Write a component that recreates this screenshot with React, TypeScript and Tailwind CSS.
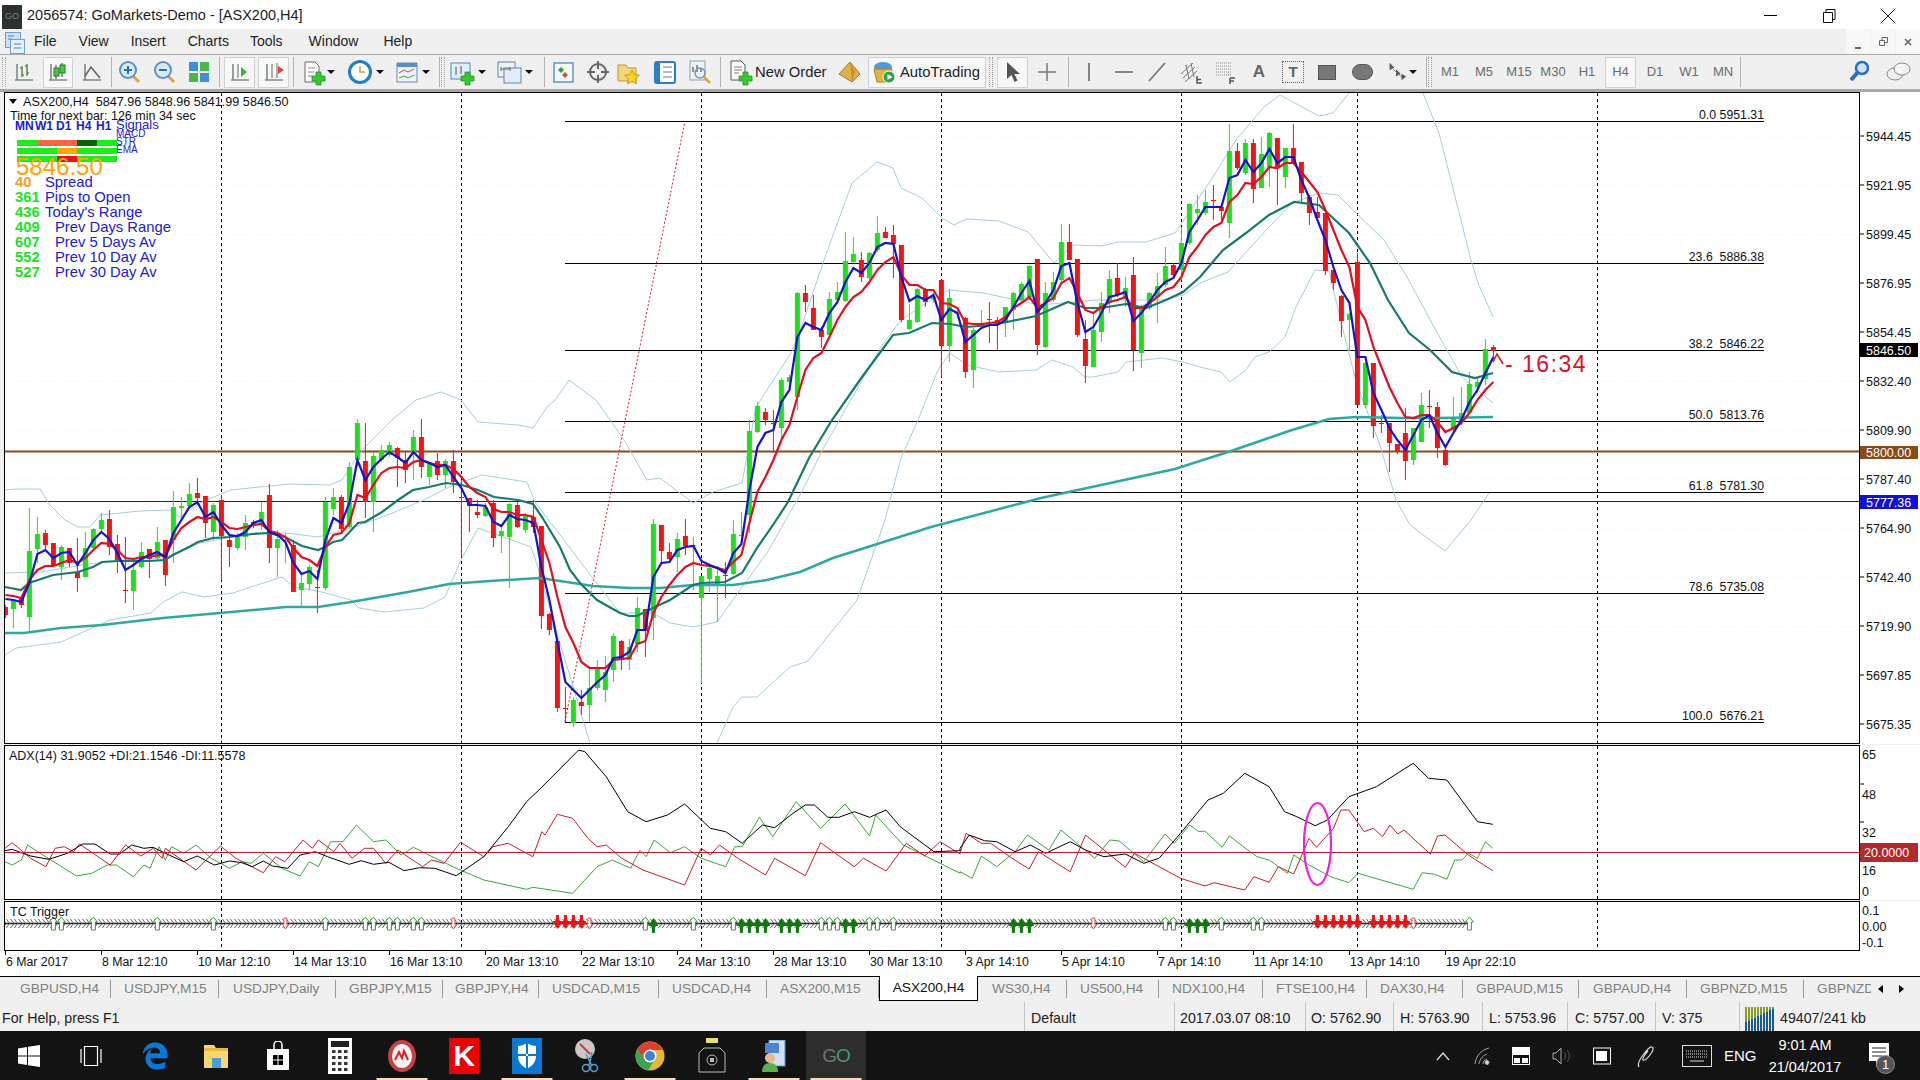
import type { ReactNode } from "react";
import { FaEdgeLegacy } from "react-icons/fa6";

const FONT = "font-['Liberation_Sans',Arial,sans-serif]";

// [green?, wick top, body top, body bottom, wick bottom], one bar every 8px
const BARS: number[][] = [
  [0,605,607,615,618],[1,600,601,609,628],[0,596,597,605,608],[1,508,551,617,632],[1,517,534,549,563],[0,530,533,545,550],[0,543,543,566,567],[1,545,547,567,580],[0,548,548,563,567],[0,538,572,578,592],
  [1,532,548,577,577],[1,528,529,548,550],[1,513,520,529,533],[0,510,519,547,555],[0,535,544,560,573],[0,537,590,591,603],[1,560,570,591,610],[1,542,552,567,568],[0,549,549,559,578],[1,527,542,558,560],
  [0,540,540,575,586],[1,491,507,540,563],[1,497,506,508,520],[1,483,494,506,507],[0,478,493,498,505],[0,496,496,523,538],[1,503,505,532,540],[0,495,500,536,580],[0,535,540,547,567],[1,533,537,548,550],
  [1,515,523,537,550],[0,520,522,524,528],[1,502,512,524,530],[0,484,495,548,563],[1,530,539,548,577],[1,533,537,538,563],[0,540,545,592,592],[1,575,583,590,607],[1,565,567,584,590],[0,570,587,588,613],
  [1,497,502,588,590],[1,488,497,509,515],[0,495,497,529,533],[1,462,467,527,528],[1,419,423,460,467],[0,423,461,502,518],[1,453,456,502,532],[1,445,450,460,462],[1,442,445,455,457],[0,447,448,458,487],
  [0,452,460,470,483],[1,430,437,452,480],[0,419,437,467,478],[1,462,463,477,485],[0,453,461,475,480],[1,459,461,475,488],[0,450,461,482,493],[0,480,497,498,557],[0,498,498,506,532],[0,500,512,515,518],
  [1,503,507,516,517],[0,500,503,538,547],[1,527,531,536,553],[1,503,504,537,588],[0,502,505,527,528],[1,513,515,530,533],[0,500,517,527,533],[0,526,526,616,629],[0,613,614,630,635],[0,641,641,708,712],
  [0,687,708,709,722],[1,697,700,723,727],[0,690,702,706,715],[1,668,688,705,722],[1,660,668,688,690],[1,656,672,690,702],[1,633,636,670,682],[0,640,641,660,670],[1,639,647,660,670],[1,597,608,644,652],
  [0,609,609,631,657],[1,519,524,618,640],[0,525,525,551,563],[0,543,552,559,560],[1,533,539,557,572],[0,519,536,546,555],[1,537,545,546,590],[1,576,576,598,683],[1,563,568,579,592],[1,566,576,585,622],
  [0,562,575,576,598],[1,520,534,574,575],[1,512,535,536,537],[1,420,431,515,533],[1,402,406,432,433],[0,408,412,420,425],[0,410,423,424,453],[1,378,380,428,438],[1,375,377,382,385],[1,292,293,397,410],
  [0,285,293,302,312],[0,295,308,330,330],[0,327,330,337,348],[1,292,299,335,335],[1,282,292,300,300],[1,232,261,301,302],[1,237,254,262,263],[0,252,260,277,282],[1,252,253,278,280],[1,216,233,250,252],
  [0,227,232,238,238],[0,225,235,244,278],[0,245,245,320,322],[1,304,320,329,330],[1,288,289,322,323],[0,288,290,302,307],[1,293,297,299,303],[0,280,280,346,377],[1,289,298,346,362],[1,310,313,314,318],
  [0,317,318,372,378],[1,328,330,370,388],[1,310,323,325,327],[0,302,319,320,343],[0,317,320,324,350],[1,307,307,323,337],[1,292,293,310,330],[1,282,284,300,303],[1,265,266,297,300],[0,259,259,345,355],
  [1,282,293,347,348],[1,272,282,300,302],[1,224,242,280,282],[0,224,242,260,260],[0,259,259,335,337],[0,320,339,366,383],[1,313,330,367,367],[1,292,303,332,342],[1,270,279,303,313],[0,263,278,295,297],
  [1,277,288,297,307],[0,257,275,350,371],[1,305,307,353,368],[1,292,293,308,310],[1,273,286,297,323],[1,247,266,285,287],[0,263,265,275,277],[1,227,243,270,280],[1,203,204,243,245],[1,195,209,213,225],
  [1,190,202,213,215],[0,185,200,201,220],[0,203,207,211,220],[1,124,151,223,238],[0,143,151,168,170],[1,139,143,173,175],[0,139,143,189,203],[1,137,154,188,188],[1,132,133,167,187],[0,138,138,167,205],
  [1,148,148,177,188],[0,124,148,163,163],[0,162,162,193,203],[0,195,197,213,225],[0,197,212,218,220],[0,213,213,271,275],[0,270,270,283,290],[0,295,296,321,337],[1,313,314,320,351],[0,253,262,405,405],
  [1,362,363,405,408],[0,363,363,426,438],[0,415,423,424,433],[0,423,423,443,472],[0,444,444,452,454],[0,408,433,461,480],[1,428,428,460,465],[1,393,405,442,442],[0,390,406,407,428],[0,402,407,448,458],
  [0,445,450,465,466],[1,397,418,430,432],[1,387,413,422,425],[1,372,384,413,413],[1,377,382,387,393],[1,339,349,379,385],[0,345,347,351,357],
];

const BLUE = [599,600,602,583,554,550,558,553,552,565,553,540,532,539,553,570,565,559,555,552,557,533,520,507,502,517,512,525,535,536,532,523,520,532,535,542,563,574,571,579,540,518,523,503,460,480,467,459,452,457,463,452,460,463,467,465,477,488,505,505,506,522,526,515,519,520,523,567,600,642,682,690,698,690,682,675,658,657,652,630,630,577,563,562,550,547,546,561,565,568,573,553,544,490,447,433,430,402,390,337,323,327,330,313,302,282,268,273,263,247,243,244,277,301,296,300,295,320,309,313,342,335,328,325,325,320,307,293,281,312,303,290,266,263,303,332,327,313,297,295,292,321,313,302,290,282,278,263,232,220,207,207,207,178,175,160,172,163,149,163,157,157,180,198,220,240,267,290,303,357,357,393,410,428,440,450,435,420,415,433,447,433,420,402,390,373,357];
const RED = [595,596,598,580,570,566,566,563,560,563,558,550,543,544,550,558,559,557,557,555,556,540,528,522,517,519,517,522,528,529,527,525,524,531,533,537,548,557,560,566,547,535,533,523,495,498,485,473,468,467,468,462,460,463,465,465,469,477,487,493,497,509,512,512,515,515,517,540,563,597,627,643,662,668,668,668,660,659,658,644,641,613,597,585,575,567,563,565,566,568,570,562,555,523,492,477,460,440,425,397,370,358,353,337,320,307,297,292,282,270,262,257,275,285,285,290,290,303,304,308,323,324,324,323,322,317,308,303,297,308,303,298,283,278,293,310,313,307,302,300,297,308,308,303,297,290,287,277,257,247,235,227,223,202,195,183,184,177,167,168,163,163,172,182,192,210,230,250,267,307,320,347,367,387,403,417,418,415,415,422,432,428,423,413,400,390,382];

const EMA_SLOW = "5,587 21,590 29,583 38,580 53,575 78,572 93,567 102,562 118,561 149,561 165,560 173,555 189,547 198,542 213,538 229,537 253,534 269,533 285,537 302,546 318,550 325,547 333,542 342,540 358,523 365,522 382,512 398,500 413,490 429,487 446,483 462,485 478,490 494,497 518,500 533,504 542,517 560,547 570,570 580,583 597,600 620,613 629,616 637,616 653,608 670,600 693,585 701,583 725,582 742,573 757,548 773,525 788,502 809,458 832,420 862,377 893,335 909,333 932,323 950,324 966,327 991,325 1007,322 1036,316 1068,302 1085,308 1101,308 1126,304 1146,308 1166,300 1183,292 1200,277 1223,250 1246,233 1269,215 1294,202 1319,205 1349,233 1370,263 1388,300 1409,333 1430,350 1452,372 1475,378 1493,373";
const SMA = "5,633 24,633 61,628 102,625 163,618 220,613 286,607 318,607 351,602 408,592 449,584 490,581 539,578 560,581 593,586 630,588 660,588 693,585 733,585 767,580 800,572 833,558 931,527 1041,498 1175,469 1228,452 1292,430 1329,419 1356,417 1402,418 1439,418 1493,417";
const BANDS = [
  "5,490 15,489 40,489 50,505 65,520 78,527 90,527 100,515 140,511 170,510 180,517 200,503 230,490 290,484 330,485 342,480 355,460 365,447 392,420 416,400 441,392 461,400 478,422 518,425 533,428 547,407 555,400 569,380 596,400 624,440 647,480 660,478 693,503 713,492 742,483 756,407 791,353 797,340 824,260 852,183 877,162 893,168 901,188 922,198 942,218 954,225 967,219 999,221 1028,232 1054,263 1073,245 1101,246 1118,242 1146,242 1175,233 1211,180 1236,140 1264,107 1280,95 1319,116 1333,113 1349,93",
  "1423,93 1439,133 1471,260 1478,283 1493,317",
  "5,573 41,572 82,565 122,560 163,558 200,543 253,533 286,533 318,537 351,528 380,518 424,500 449,487 482,475 527,482 535,502 592,577 620,613 653,613 670,623 693,627 717,622 740,590 767,553 800,495 824,447 881,347 901,320 938,295 950,290 983,293 1007,298 1040,305 1095,300 1162,300 1183,295 1200,283 1228,272 1269,227 1292,203 1319,193 1338,195 1358,215 1384,240 1407,277 1434,327 1462,377 1493,403",
  "5,655 16,648 61,642 110,620 151,613 163,602 182,592 204,597 233,593 257,585 282,577 294,587 322,592 351,600 359,608 384,612 424,608 445,597 461,560 478,528 492,533 531,547 539,570 559,640 590,743",
  "717,743 733,707 742,697 757,697 790,667 808,661 857,600 885,520 901,458 918,420 938,370 950,353 967,365 999,372 1036,370 1052,360 1073,367 1085,377 1093,377 1118,372 1126,362 1162,358 1183,362 1200,367 1221,372 1230,382 1246,370 1255,357 1269,352 1285,337 1296,307 1315,270 1329,271 1343,330 1357,385 1380,445 1396,500 1410,525 1430,540 1445,551 1471,520 1489,493",
];

// ADX lines, sampled in crop units: x / 1.633, y / 3 + 730
const ADX_BLACK = [[8,362,20,358,50,378,80,388,110,370,135,342,155,342,180,372,195,372,215,345,235,355,250,352,270,370,300,395,322,378,350,405,375,393,395,398,412,410,430,393,445,408,470,415,490,375,515,365,535,380,570,403,590,392,610,403,635,397,660,422,685,413,710,415,745,437,790,380,830,290,860,215,880,180,945,60,955,65,990,140,1025,245,1055,275,1090,255,1118,222,1160,295,1185,305,1212,340,1245,285,1265,293,1295,250,1315,225,1330,225,1352,262,1370,262,1395,245,1420,262,1447,240,1470,290,1525,365,1568,362],[0,355,15,315,40,332,60,335,90,365,115,345,140,370,180,335,205,360,235,380,270,372,300,400,325,385,360,310,405,210,430,190,465,130,505,170,530,245,550,260,580,287,600,270,635,200,680,170,740,100,765,145,795,150,845,275,870,283]];
const ADX_RED = [[8,355,20,338,50,385,75,410,90,355,105,350,120,365,130,342,180,405,205,345,230,378,250,355,265,385,270,355,320,420,360,348,385,385,430,428,450,380,465,395,495,330,510,355,520,330,545,365,555,340,575,385,595,355,610,355,630,400,650,360,690,410,705,390,725,400,752,337,790,380,805,350,830,340,870,380,885,305,890,315,910,253,935,265,960,325,975,350,990,345,1015,385,1050,420,1118,465,1145,355,1160,375,1175,345,1205,385,1250,435,1265,385,1315,437,1340,338,1395,410,1410,385,1447,423,1480,340,1510,378,1535,335,1568,372],[0,370,10,310,35,340,50,340,85,385,113,417,128,365,180,425,205,315,270,412,285,370,360,445,400,468,415,458,465,480,480,440,505,457,520,410,545,432,570,325,582,352,610,295,622,240,635,240,660,305,675,295,690,320,702,285,715,312,725,300,768,372,780,318,792,315,830,375,870,422]];
const ADX_GREEN = [[8,395,20,405,35,390,45,345,70,375,125,438,150,430,175,405,190,405,218,440,235,405,245,415,260,350,270,390,280,350,300,370,320,345,345,385,375,415,395,395,410,400,430,370,460,415,490,438,505,395,520,410,540,335,560,335,582,285,610,335,630,330,655,375,675,352,700,375,745,415,790,450,860,478,870,472,935,490,975,410,1000,390,1030,415,1045,360,1055,380,1068,330,1095,368,1118,350,1145,385,1185,410,1200,350,1212,350,1240,262,1262,320,1300,215,1340,295,1380,222,1420,318,1430,255,1475,345,1568,430],[0,425,20,445,35,378,60,410,90,365,110,315,145,360,165,300,220,385,245,330,260,333,300,395,335,312,350,340,375,285,390,305,400,303,428,352,440,318,470,360,485,380,505,390,535,430,545,375,570,405,605,440,635,458,650,430,740,478,755,428,775,433,795,448,808,390,820,390,830,370,845,385,858,335,870,355]];

const toAbs = (parts: number[][]) =>
  parts
    .flatMap((p, i) => {
      const out: string[] = [];
      for (let j = 0; j < p.length; j += 2) out.push(`${(p[j] / 1.633 + (i ? 960 : 0)).toFixed(1)},${(p[j + 1] / 3 + 730).toFixed(1)}`);
      return out;
    })
    .join(" ");

const barX = (k: number) => 5.4 + 8 * k;
const series = (ys: number[]) => ys.map((y, k) => `${barX(k)},${y}`).join(" ");

const VLINES = [221, 461, 701, 941, 1181, 1357, 1597];
const FIBS: [string, number][] = [
  ["0.0 5951.31", 121],
  ["23.6\u00a0 5886.38", 263],
  ["38.2\u00a0 5846.22", 350],
  ["50.0\u00a0 5813.76", 421],
  ["61.8\u00a0 5781.30", 492],
  ["78.6\u00a0 5735.08", 593],
  ["100.0\u00a0 5676.21", 722],
];
const PRICE_TICKS: [string, number][] = [
  ["5944.45", 136], ["5921.95", 185], ["5899.45", 234], ["5876.95", 283], ["5854.45", 332], ["5832.40", 381], ["5809.90", 430],
  ["5787.40", 479], ["5764.90", 528], ["5742.40", 577], ["5719.90", 626], ["5697.85", 675], ["5675.35", 724],
];

const TC_GREEN_OUT = [6, 7, 11, 19, 26, 40, 45, 46, 48, 49, 51, 52, 80, 86, 91, 102, 103, 104, 108, 109, 111, 145, 146, 152, 156, 157, 183];
const TC_GREEN = [81, 92, 93, 94, 95, 97, 98, 99, 105, 106, 126, 127, 128, 148, 149, 150];
const TC_RED = [69, 70, 71, 72, 164, 165, 166, 167, 168, 169, 171, 172, 173, 174, 175];
const TC_RED_OUT = [35, 56, 73, 136, 176];

const TIME_LABELS = ["6 Mar 2017", "8 Mar 12:10", "10 Mar 12:10", "14 Mar 13:10", "16 Mar 13:10", "20 Mar 13:10", "22 Mar 13:10", "24 Mar 13:10", "28 Mar 13:10", "30 Mar 13:10", "3 Apr 14:10", "5 Apr 14:10", "7 Apr 14:10", "11 Apr 14:10", "13 Apr 14:10", "19 Apr 22:10"];

const TABS: [string, string][] = [
  ["GBPUSD,H4", "w-[109px] pl-[18px]"], ["USDJPY,M15", "w-[108px] pl-[13px]"], ["USDJPY,Daily", "w-[117px] pl-[14px]"], ["GBPJPY,M15", "w-[107px] pl-[13px]"],
  ["GBPJPY,H4", "w-[96px] pl-[12px]"], ["USDCAD,M15", "w-[120px] pl-[13px]"], ["USDCAD,H4", "w-[108px] pl-[13px]"], ["ASX200,M15", "w-[112px] pl-[13px]"],
];
const TABS_AFTER: [string, string][] = [
  ["WS30,H4", "w-[89px] pl-[14px]"], ["US500,H4", "w-[92px] pl-[13px]"], ["NDX100,H4", "w-[104px] pl-[13px]"], ["FTSE100,H4", "w-[104px] pl-[13px]"],
  ["DAX30,H4", "w-[96px] pl-[13px]"], ["GBPAUD,M15", "w-[116px] pl-[13px]"], ["GBPAUD,H4", "w-[108px] pl-[14px]"], ["GBPNZD,M15", "w-[117px] pl-[13px]"],
];

function Grip({ className = "" }: { className?: string }) {
  return <div className={`w-[4px] h-[30px] shrink-0 border-x border-dotted border-[#a0a0a0] ${className}`} />;
}

function Sep({ className = "" }: { className?: string }) {
  return <div className={`w-px h-[30px] shrink-0 bg-[#b4b4b4] ${className}`} />;
}

function Cell({ className = "", active = false, children }: { className?: string; active?: boolean; children?: ReactNode }) {
  return (
    <div className={`h-[31px] shrink-0 flex items-center justify-center ${active ? "bg-[#f8f8f8] border border-[#d2d2d2]" : ""} ${className}`}>
      {children}
    </div>
  );
}

function Caret({ className = "" }: { className?: string }) {
  return (
    <div className={`w-[8px] shrink-0 flex justify-center ${className}`}>
      <div className="border-x-[4px] border-t-[4px] border-x-transparent border-t-[#111]" />
    </div>
  );
}

function Ico({ children, size = 24 }: { children: ReactNode; size?: number }) {
  return (
    <svg width={size} height={size} viewBox="0 0 24 24" fill="none" className="shrink-0 overflow-visible">
      {children}
    </svg>
  );
}

const AXES = <path d="M5 4v16M3 20h18" stroke="#7b8a8a" strokeWidth="1.6" />;
const PLUS = <path d="M15 12h5v4h4v5h-4v4h-5v-4h-4v-5h4z" fill="#35c831" stroke="#1e8a1c" strokeWidth="0.7" />;

function BarsIcon() {
  return <Ico>{AXES}<path d="M10 6v11M8 8h2M10 15h2M15 4v12M13 6h2M15 13h2" stroke="#6b8a5a" strokeWidth="1.6" /></Ico>;
}
function CandleIcon() {
  return <Ico>{AXES}<path d="M10 5v14" stroke="#333" /><rect x="8" y="8" width="5" height="8" fill="#4bc44b" stroke="#2a7a2a" /><path d="M16 3v14" stroke="#333" /><rect x="14" y="5" width="5" height="8" fill="#4bc44b" stroke="#2a7a2a" /></Ico>;
}
function LineIcon() {
  return <Ico>{AXES}<path d="M5 16 11 7l4 5 5 6" stroke="#666" strokeWidth="1.6" /></Ico>;
}
function ZoomIcon({ plus }: { plus?: boolean }) {
  return (
    <Ico>
      <path d="m14 15 7 7" stroke="#d9a63a" strokeWidth="3" />
      <circle cx="10" cy="10" r="8" fill="#d8eafa" stroke="#5d8fc7" strokeWidth="2" />
      <path d={plus ? "M6 10h8M10 6v8" : "M6 10h8"} stroke="#2d6fb5" strokeWidth="2" />
    </Ico>
  );
}
function GridIcon() {
  return <Ico><rect x="2" y="2" width="9" height="9" fill="#3f8ed8" /><rect x="13" y="2" width="9" height="9" fill="#49b849" /><rect x="2" y="13" width="9" height="9" fill="#49b849" /><rect x="13" y="13" width="9" height="9" fill="#3f8ed8" /></Ico>;
}
function ShiftIcon() {
  return <Ico>{AXES}<path d="M10 4v14" stroke="#666" /><path d="m13 7 6 5-6 5z" fill="#35b835" /></Ico>;
}
function ScrollIcon() {
  return <Ico>{AXES}<path d="M10 4v14M15 3v15" stroke="#666" /><path d="m22 10-6-4v8z" fill="#e04040" /></Ico>;
}
function NewFileIcon() {
  return <Ico><path d="M4 2h10l4 4v16H4z" fill="#fff" stroke="#666" /><path d="M7 8h7M7 12h6M7 16h4" stroke="#888" />{PLUS}</Ico>;
}
function ClockIcon() {
  return <Ico><circle cx="12" cy="12" r="10.5" fill="#fff" stroke="#1f7fc9" strokeWidth="3" /><path d="M12 6v6h5" stroke="#e09a30" strokeWidth="1.6" /></Ico>;
}
function IndicatorIcon() {
  return <Ico><rect x="2" y="3" width="20" height="19" fill="#eef3fa" stroke="#5c8fc0" /><rect x="2" y="3" width="20" height="4" fill="#5c8fc0" /><path d="m4 13 5-3 4 2 6-3" stroke="#d04a3a" /><path d="m4 18 5-2 4 2 6-3" stroke="#4aa04a" /></Ico>;
}
function NewChartIcon() {
  return <Ico><rect x="1" y="3" width="19" height="16" fill="#dfeefa" stroke="#4d86bf" /><path d="M6 7v8M11 6v8" stroke="#555" />{PLUS}</Ico>;
}
function CopyChartIcon() {
  return <Ico><rect x="1" y="2" width="17" height="15" fill="#eef3f8" stroke="#5c86ae" /><rect x="7" y="8" width="17" height="15" fill="#e4edf6" stroke="#5c86ae" /><path d="M4 9h9M4 7v4M13 7v4" stroke="#666" /></Ico>;
}
function ProfileIcon() {
  return <Ico><rect x="3" y="3" width="19" height="19" fill="#f4f8fc" stroke="#6c9bc8" strokeWidth="1.6" /><path d="m10 7 3 3-3 3-3-3z" fill="#38a038" /><path d="m14 12 3 3-3 3-3-3z" fill="#d9542f" /></Ico>;
}
function CrossCircleIcon() {
  return <Ico><circle cx="12" cy="12" r="8" stroke="#666" strokeWidth="2" /><path d="M12 1v8M12 15v8M1 12h8M15 12h8" stroke="#666" strokeWidth="2" /></Ico>;
}
function FolderIcon() {
  return <Ico><path d="M2 5h8l2 3h8v13H2z" fill="#f6d67a" stroke="#b8943a" /><path d="m16 10 2.3 4.6 5 .7-3.6 3.5.9 5-4.6-2.4-4.6 2.4.9-5-3.6-3.5 5-.7z" fill="#f9d423" stroke="#c59a1a" /></Ico>;
}
function NavIcon() {
  return <Ico><rect x="2" y="2" width="20" height="21" rx="2" fill="#fff" stroke="#2b7fc4" strokeWidth="2" /><rect x="2" y="2" width="5" height="21" fill="#2b7fc4" /><path d="M10 7h9M10 12h9M10 17h9" stroke="#777" /></Ico>;
}
function ReportIcon() {
  return <Ico><rect x="2" y="1" width="15" height="19" fill="#eef2f6" stroke="#8aa0b5" /><path d="M5 12V7M9 12V5M13 12V8" stroke="#5b7a9a" strokeWidth="1.5" /><circle cx="12" cy="13" r="5" fill="none" stroke="#7f93a8" strokeWidth="1.5" /><path d="m16 17 6 6" stroke="#d9a63a" strokeWidth="2.5" /></Ico>;
}
function OrderIcon() {
  return <Ico><path d="M3 1h10l4 4v15H3z" fill="#fff" stroke="#555" /><path d="M6 7h8M6 10h8M6 13h5" stroke="#777" />{PLUS}</Ico>;
}
function DiamondIcon() {
  return <Ico><path d="M13 2 23 14l-8 8L2 14z" fill="#e0b04a" stroke="#a87a20" /><path d="m13 2 5 10-3 10" fill="#c89030" /></Ico>;
}
function RobotIcon() {
  return <Ico><ellipse cx="11" cy="7" rx="9" ry="5" fill="#4f9bd6" /><path d="M2 9h18l-2 13H5z" fill="#e4b340" stroke="#a87f22" /><circle cx="17" cy="17" r="6" fill="#27a84a" stroke="#fff" /><path d="m15.5 14 5 3-5 3z" fill="#fff" /></Ico>;
}
function CursorIcon() {
  return <Ico><path d="M6 2v17l4.5-4 3 7 3-1.5-3-6.5h5.5z" fill="#555" /></Ico>;
}
function TfLabel({ text, className }: { text: string; className?: string }) {
  return <Cell className={`w-[28px] text-[13px] text-[#6c6c6c] ${className}`}>{text}</Cell>;
}

function TitleBar() {
  return (
    <div className="h-[29px] bg-white flex items-center shrink-0">
      <div className="ml-[2px] w-[20px] h-[24px] mt-[4px] bg-[#2c3130] flex items-center justify-center">
        <span className="text-[9px] text-[#70807a]">GO</span>
      </div>
      <span className="ml-[5px] mt-[2px] text-[14.5px] text-[#1c1c1c] whitespace-nowrap">2056574: GoMarkets-Demo - [ASX200,H4]</span>
      <div className="ml-auto flex items-center mr-[25px] mt-[2px]">
        <div className="w-[13px] h-px bg-black mr-[45px]" />
        <svg width="14" height="14" viewBox="0 0 14 14" fill="none" stroke="#111" className="mr-[45px]">
          <path d="M1.5 3.5h9v10h-9zM4 3.5V.5h9v10h-2.5" />
        </svg>
        <svg width="14" height="14" viewBox="0 0 14 14" stroke="#111"><path d="m.5.5 13 13M13.5.5l-13 13" /></svg>
      </div>
    </div>
  );
}

function MenuBar() {
  return (
    <div className="h-[25px] bg-[#f0f0f0] flex items-center shrink-0 text-[14px] text-[#222]">
      <svg width="20" height="22" viewBox="0 0 20 22" className="ml-[5px] mt-[2px] shrink-0">
        <rect x="0.5" y="0.5" width="15" height="15" fill="#cfe2f5" stroke="#6f9fcb" />
        <rect x="5.5" y="7.5" width="14" height="14" fill="#e7f0fa" stroke="#6f9fcb" />
        <path d="M3 4h6M3 7h3M9 12h7M9 16h7" stroke="#4d7faf" />
      </svg>
      <span className="ml-[9px]">File</span>
      <span className="ml-[22px]">View</span>
      <span className="ml-[22px]">Insert</span>
      <span className="ml-[22px]">Charts</span>
      <span className="ml-[21px]">Tools</span>
      <span className="ml-[26px]">Window</span>
      <span className="ml-[25px]">Help</span>
      <div className="ml-auto flex h-[25px] text-[#666]">
        <div className="w-[24px] bg-[#f8f8f8] flex items-end justify-center pb-[5px] mr-px"><div className="w-[6px] h-[2px] bg-[#666]" /></div>
        <div className="w-[24px] bg-[#f8f8f8] flex items-center justify-center mr-px">
          <svg width="9" height="9" viewBox="0 0 9 9" fill="none" stroke="#666"><path d="M.5 3.5h5v5h-5zM3 3.5v-3h5.5v5H6" /></svg>
        </div>
        <div className="w-[24px] bg-[#f8f8f8] flex items-center justify-center">
          <svg width="8" height="8" viewBox="0 0 8 8" stroke="#666" strokeWidth="1.6"><path d="m1 1 6 6M7 1 1 7" /></svg>
        </div>
      </div>
    </div>
  );
}

function Toolbar() {
  return (
    <div className={`h-[35px] bg-[#f0f0f0] border-t border-[#a8a8a8] flex items-center shrink-0 ${FONT}`}>
      <Grip className="ml-[2px]" />
      <Cell className="w-[28px] ml-[4px]"><BarsIcon /></Cell>
      <Cell active className="w-[30px] ml-[5px]"><CandleIcon /></Cell>
      <Cell className="w-[28px] ml-[5px]"><LineIcon /></Cell>
      <Sep className="ml-[5px]" />
      <Cell className="w-[28px] ml-[4px]"><ZoomIcon plus /></Cell>
      <Cell className="w-[28px] ml-[7px]"><ZoomIcon /></Cell>
      <Cell className="w-[28px] ml-[6px]"><GridIcon /></Cell>
      <Sep className="ml-[6px]" />
      <Cell active className="w-[31px] ml-[4px]"><ShiftIcon /></Cell>
      <Cell active className="w-[31px] ml-[3px]"><ScrollIcon /></Cell>
      <Sep className="ml-[4px]" />
      <Cell className="w-[28px] ml-[5px]"><NewFileIcon /></Cell>
      <Caret />
      <Cell className="w-[28px] ml-[11px]"><ClockIcon /></Cell>
      <Caret className="ml-[2px]" />
      <Cell className="w-[28px] ml-[9px]"><IndicatorIcon /></Cell>
      <Caret className="ml-[1px]" />
      <Sep className="ml-[9px]" />
      <Grip className="ml-px" />
      <Cell className="w-[28px] ml-[3px]"><NewChartIcon /></Cell>
      <Caret className="ml-[2px]" />
      <Cell className="w-[28px] ml-[9px]"><CopyChartIcon /></Cell>
      <Caret className="ml-[2px]" />
      <Sep className="ml-[11px]" />
      <Cell className="w-[28px] ml-[4px]"><ProfileIcon /></Cell>
      <Cell className="w-[28px] ml-[7px]"><CrossCircleIcon /></Cell>
      <Cell className="w-[28px] ml-[2px]"><FolderIcon /></Cell>
      <Cell className="w-[28px] ml-[9px]"><NavIcon /></Cell>
      <Cell className="w-[28px] ml-[7px]"><ReportIcon /></Cell>
      <Sep className="ml-[6px]" />
      <Cell className="w-[24px] ml-[7px]"><OrderIcon /></Cell>
      <span className="ml-[3px] w-[72px] text-[14.8px] text-[#222] whitespace-nowrap">New Order</span>
      <Cell className="w-[28px] ml-[8px]"><DiamondIcon /></Cell>
      <Cell active className="w-[118px] ml-[5px] !justify-start pl-[3px]">
        <RobotIcon />
        <span className="ml-[4px] text-[14.8px] text-[#222] whitespace-nowrap">AutoTrading</span>
      </Cell>
      <Grip className="ml-[3px]" />
      <Cell active className="w-[31px] ml-[4px]"><CursorIcon /></Cell>
      <Cell className="w-[28px] ml-[5px]"><Ico><path d="M12 3v18M3 12h18" stroke="#777" strokeWidth="1.5" /></Ico></Cell>
      <Sep className="ml-[7px]" />
      <Cell className="w-[28px] ml-[6px]"><Ico><path d="M12 3v18" stroke="#777" strokeWidth="1.8" /></Ico></Cell>
      <Cell className="w-[28px] ml-[7px]"><Ico><path d="M3 12h18" stroke="#777" strokeWidth="1.8" /></Ico></Cell>
      <Cell className="w-[28px] ml-[5px]"><Ico><path d="m4 21 16-18" stroke="#777" strokeWidth="1.8" /></Ico></Cell>
      <Cell className="w-[28px] ml-[6px]"><Ico><path d="m2 14 12-11M4 18 16 7M6 22 18 11M7 5l3 14M12 3l3 14" stroke="#777" /><path d="M18 16v7h5M18 19.5h4" stroke="#555" strokeWidth="1.5" /></Ico></Cell>
      <Cell className="w-[28px] ml-[6px]"><Ico><path d="M3 3h15M3 6h15M3 9h15M3 12h15M3 15h15" stroke="#888" strokeDasharray="1 1" /><path d="M17 18v6M17 18h5M17 21h4" stroke="#555" strokeWidth="1.5" /></Ico></Cell>
      <Cell className="w-[28px] ml-[6px] text-[17px] font-bold text-[#666]">A</Cell>
      <Cell className="w-[28px] ml-[6px]">
        <div className="w-[22px] h-[22px] border border-dotted border-[#666] flex items-center justify-center text-[15px] font-bold text-[#666]">T</div>
      </Cell>
      <Cell className="w-[28px] ml-[6px]"><div className="w-[18px] h-[15px] bg-[#777] border border-[#555]" /></Cell>
      <Cell className="w-[28px] ml-[7px]"><div className="w-[21px] h-[16px] rounded-full bg-[#777] border border-[#555]" /></Cell>
      <Cell className="w-[27px] ml-[6px]"><Ico size={22}><path d="m5 2 5 5-5 3zM12 9l5 5-5 3zM18 14l5 3-5 4z" fill="#555" /><path d="m7 7 6 6M13 14l5 3" stroke="#888" /></Ico></Cell>
      <Caret />
      <Sep className="ml-[9px]" />
      <Grip className="ml-px" />
      <TfLabel text="M1" className="ml-[4px]" />
      <TfLabel text="M5" className="ml-[6px]" />
      <TfLabel text="M15" className="ml-[7px]" />
      <TfLabel text="M30" className="ml-[6px]" />
      <TfLabel text="H1" className="ml-[6px]" />
      <Cell active className="w-[31px] ml-[4px] text-[13px] text-[#6c6c6c]">H4</Cell>
      <TfLabel text="D1" className="ml-[5px]" />
      <TfLabel text="W1" className="ml-[6px]" />
      <TfLabel text="MN" className="ml-[6px]" />
      <Sep className="ml-[3px]" />
      <Cell className="w-[28px] ml-[104px]">
        <Ico><circle cx="15" cy="8" r="6" fill="#cfe2f5" stroke="#2a6fc0" strokeWidth="2.5" /><path d="m11 12-7 8" stroke="#2a6fc0" strokeWidth="4" /></Ico>
      </Cell>
      <Cell className="w-[28px] ml-[11px]">
        <Ico><ellipse cx="9" cy="14" rx="8" ry="6" fill="#f0f0f0" stroke="#888" /><ellipse cx="16" cy="9" rx="8" ry="6" fill="#f4f4f4" stroke="#888" /></Ico>
      </Cell>
    </div>
  );
}

function Legend() {
  const rows: [string, string, boolean][] = [
    ["361", "Pips to Open", false],
    ["436", "Today's Range", false],
    ["409", "Prev Days Range", true],
    ["607", "Prev 5 Days Av", true],
    ["552", "Prev 10 Day Av", true],
    ["527", "Prev 30 Day Av", true],
  ];
  return (
    <div className="absolute left-0 top-0 w-[320px] h-[200px]">
      <div className="absolute left-[4px] top-[6px] border-x-[4px] border-t-[5px] border-x-transparent border-t-black" />
      <div className="absolute left-[18px] top-[2px] text-[12.6px] leading-[15px] whitespace-pre text-[#111]">ASX200,H4  5847.96 5848.96 5841.99 5846.50</div>
      <div className="absolute left-[5px] top-[16px] text-[12.5px] leading-[15px] whitespace-pre text-[#111]">Time for next bar: 126 min 34 sec</div>
      <div className="absolute left-[10px] top-[26px] flex text-[12px] leading-[14px] font-bold text-[#2020d0]">
        <span className="w-[20px]">MN</span><span className="w-[20px]">W1</span><span className="w-[20px] pl-px">D1</span><span className="w-[21px] pl-px">H4</span><span>H1</span>
      </div>
      <div className="absolute left-[111px] top-[25px] text-[13px] leading-[14px] text-[#2020d0]">Signals</div>
      <div className="absolute left-[111px] top-[35px] text-[10px] leading-[12px] text-[#2020d0]">MACD</div>
      <div className="absolute left-[111px] top-[43px] text-[10px] leading-[12px] text-[#2020d0]">STR</div>
      <div className="absolute left-[111px] top-[51px] text-[10px] leading-[12px] text-[#2020d0]">EMA</div>
      <div className="absolute left-[12px] top-[47px] w-[100px] flex flex-col gap-[2px]">
        <div className="flex h-[6px]"><div className="w-[20px] bg-[#16f016]" /><div className="w-[40px] bg-[#ff6347]" /><div className="w-[20px] bg-[#006400]" /><div className="w-[20px] bg-[#16f016]" /></div>
        <div className="flex h-[6px]"><div className="w-[40px] bg-[#16f016]" /><div className="w-[20px] bg-[#ffa500]" /><div className="w-[40px] bg-[#16f016]" /></div>
        <div className="flex h-[6px]"><div className="w-[40px] bg-[#16f016]" /><div className="w-[20px] bg-[#f01010]" /><div className="w-[40px] bg-[#16f016]" /></div>
      </div>
      <div className="absolute left-[11px] top-[60px] text-[24px] leading-[28px] text-[#ffa500]">5846.50</div>
      <div className="absolute left-[10px] top-[82px] flex flex-col text-[14.8px] leading-[15px]">
        <div className="flex">
          <span className="w-[23px] font-bold text-[#f0a030]">40</span>
          <span className="ml-[7px] text-[#2020d0]">Spread</span>
        </div>
        {rows.map(([n, label, indent]) => (
          <div key={label} className="flex whitespace-nowrap">
            <span className="w-[23px] font-bold text-[#22e022]">{n}</span>
            <span className={`${indent ? "ml-[17px]" : "ml-[7px]"} text-[#2020d0]`}>{label}</span>
          </div>
        ))}
      </div>
    </div>
  );
}

function VLines({ top, bottom }: { top: number; bottom: number }) {
  return (
    <>
      {VLINES.map((x) => (
        <line key={x} x1={x + 0.5} x2={x + 0.5} y1={top} y2={bottom} stroke="#000" strokeDasharray="3 3" />
      ))}
    </>
  );
}

function AxisLabel({ y, text }: { y: number; text: string }) {
  return (
    <g>
      <line x1={1860} x2={1864} y1={y} y2={y} stroke="#000" />
      <text x={1866} y={y + 4.5} fontSize="12.5" fill="#111">{text}</text>
    </g>
  );
}

function PriceBox({ y, h = 14, text, fill }: { y: number; h?: number; text: string; fill: string }) {
  return (
    <g>
      <rect x={1860} y={y} width={58} height={h} fill={fill} />
      <text x={1866} y={y + h / 2 + 4.5} fontSize="12.5" fill="#fff">{text}</text>
    </g>
  );
}

function MainChart() {
  return (
    <div className="flex h-[652px] shrink-0">
      <div className="ml-[4px] relative w-[1856px] h-[652px] border border-black shrink-0 bg-white overflow-hidden">
        <svg width="1854" height="650" viewBox="5 93 1854 650" className="block">
          {PRICE_TICKS.map(([t, y]) => (
            <line key={t} x1={5} x2={1859} y1={y + 0.5} y2={y + 0.5} stroke="#f6f4e6" strokeDasharray="2 4" />
          ))}
          <VLines top={93} bottom={743} />
          {FIBS.map(([t, y]) => (
            <g key={t}>
              <line x1={565} x2={1764} y1={y + 0.5} y2={y + 0.5} stroke="#000" />
              <text x={1764} y={y - 2} textAnchor="end" fontSize="12.3" fill="#111">{t}</text>
            </g>
          ))}
          <line x1={565} y1={722} x2={685} y2={121} stroke="#c8202a" strokeDasharray="2 2" />
          <line x1={5} x2={1859} y1={451.5} y2={451.5} stroke="#8b4a1a" strokeWidth="2" />
          <line x1={5} x2={1859} y1={501.5} y2={501.5} stroke="#1010c8" />
          {BANDS.map((b) => (
            <polyline key={b.slice(0, 12)} points={b} fill="none" stroke="#a6cedb" />
          ))}
          {BARS.map(([up, wt, bt, bb, wb], k) => {
            const x = barX(k);
            const c = up ? "#1fe01f" : "#ee1616";
            return (
              <g key={k}>
                <line x1={x} x2={x} y1={wt} y2={wb} stroke={c} />
                <rect x={x - 2.5} y={bt} width={5} height={Math.max(bb - bt, 1)} fill={c} />
              </g>
            );
          })}
          <polyline points={SMA} fill="none" stroke="#30a8a0" strokeWidth="2.5" />
          <polyline points={EMA_SLOW} fill="none" stroke="#187a6e" strokeWidth="2.2" />
          <polyline points={series(RED)} fill="none" stroke="#e01020" strokeWidth="2.2" />
          <polyline points={series(BLUE)} fill="none" stroke="#1414c8" strokeWidth="2.2" />
          <polyline points="1493,362 1497,354 1503,364" fill="none" stroke="#e01020" strokeWidth="1.5" />
          <text x={1505} y={372} fontSize="23" letterSpacing="1.5" fill="#e01020">- 16:34</text>
        </svg>
        <Legend />
      </div>
      <svg width="60" height="652" viewBox="1860 92 60 652" className="block shrink-0 bg-white">
        {PRICE_TICKS.map(([t, y]) => (
          <AxisLabel key={t} y={y} text={t} />
        ))}
        <PriceBox y={343} text="5846.50" fill="#000" />
        <PriceBox y={446} h={13} text="5800.00" fill="#8b4a1a" />
        <PriceBox y={495} text="5777.36" fill="#1010d8" />
      </svg>
    </div>
  );
}

function AdxPanel() {
  return (
    <div className="flex h-[155px] mt-px shrink-0">
      <div className="ml-[4px] relative w-[1856px] h-[155px] border border-black shrink-0 bg-white overflow-hidden">
        <svg width="1854" height="153" viewBox="5 746 1854 153" className="block">
          <VLines top={746} bottom={899} />
          <polyline points={toAbs(ADX_GREEN)} fill="none" stroke="#3aa83a" />
          <polyline points={toAbs(ADX_RED)} fill="none" stroke="#c81e2a" />
          <polyline points={toAbs(ADX_BLACK)} fill="none" stroke="#000" />
          <line x1={5} x2={1859} y1={852.5} y2={852.5} stroke="#b81e30" />
          <ellipse cx={1317.5} cy={844} rx={13.5} ry={41} fill="none" stroke="#f01ee0" strokeWidth="2.2" />
        </svg>
        <div className="absolute left-[4px] top-[3px] text-[12.5px] leading-[15px] whitespace-pre text-[#111]">ADX(14) 31.9052 +DI:21.1546 -DI:11.5578</div>
      </div>
      <svg width="60" height="155" viewBox="1860 745 60 155" className="block shrink-0 bg-white">
        <text x={1862} y={759} fontSize="12.5" fill="#111">65</text>
        <line x1={1860} x2={1864} y1={784} y2={784} stroke="#000" />
        <text x={1862} y={799} fontSize="12.5" fill="#111">48</text>
        <line x1={1860} x2={1864} y1={822} y2={822} stroke="#000" />
        <text x={1862} y={837} fontSize="12.5" fill="#111">32</text>
        <rect x={1860} y={843} width={58} height={19} fill="#b42a2a" />
        <text x={1864} y={857} fontSize="12.5" fill="#fff">20.0000</text>
        <text x={1862} y={875} fontSize="12.5" fill="#111">16</text>
        <text x={1862} y={896} fontSize="12.5" fill="#111">0</text>
      </svg>
    </div>
  );
}

function TcPanel() {
  const lastBar = 183;
  const chevrons: number[] = [];
  for (let k = 0; k < lastBar; k++) chevrons.push(k);
  return (
    <div className="flex h-[50px] mt-px shrink-0">
      <div className="ml-[4px] relative w-[1856px] h-[50px] border border-black shrink-0 bg-white overflow-hidden">
        <svg width="1854" height="48" viewBox="5 902 1854 48" className="block">
          <VLines top={902} bottom={950} />
          <line x1={5} x2={barX(lastBar)} y1={923.5} y2={923.5} stroke="#222" strokeWidth="1.5" />
          {chevrons.map((k) => (
            <path key={k} d={`M${barX(k) - 3} 919l4 4.5-4 4.5M${barX(k) + 1} 919l3 4.5-3 4.5`} fill="none" stroke="#555" strokeWidth="0.9" />
          ))}
          {TC_GREEN_OUT.map((k) => (
            <path key={k} d={`M${barX(k)} 917l4 5h-2v8h-4v-8h-2z`} fill="#fff" stroke="#2e8b2e" strokeWidth="0.9" />
          ))}
          {TC_RED_OUT.map((k) => (
            <path key={k} d={`M${barX(k)} 929l3-5h-1.5v-6h-3v6h-1.5z`} fill="#fff" stroke="#e04040" strokeWidth="0.9" />
          ))}
          {TC_GREEN.map((k) => (
            <path key={k} d={`M${barX(k)} 918l5 8h-3.5v7h-3v-7h-3.5z`} fill="#0a7a0a" />
          ))}
          {TC_RED.map((k) => (
            <path key={k} d={`M${barX(k)} 929l-5-8h3.5v-6h3v6h3.5z`} fill="#ee1010" />
          ))}
        </svg>
        <div className="absolute left-[5px] top-[3px] text-[12.5px] leading-[15px] text-[#111]">TC Trigger</div>
      </div>
      <svg width="60" height="50" viewBox="1860 901 60 50" className="block shrink-0 bg-white">
        <text x={1862} y={915} fontSize="12.5" fill="#111">0.1</text>
        <text x={1862} y={931} fontSize="12.5" fill="#111">0.00</text>
        <text x={1862} y={947} fontSize="12.5" fill="#111">-0.1</text>
      </svg>
    </div>
  );
}

function TimeAxis() {
  return (
    <div className="h-[25px] bg-white flex pl-[5px] shrink-0">
      {TIME_LABELS.map((t) => (
        <div key={t} className="w-[96px] border-l border-black h-[4px] shrink-0">
          <div className="pt-[4px] text-[12.3px] leading-[15px] whitespace-nowrap text-[#111]">{t}</div>
        </div>
      ))}
    </div>
  );
}

function TabStrip() {
  return (
    <div className="h-[25px] bg-[#f0f0f0] border-t border-black flex items-stretch shrink-0 text-[13.7px] text-[#808080] relative">
      <div className="w-[2px] shrink-0" />
      {TABS.map(([t, w]) => (
        <div key={t} className={`${w} shrink-0 border-r border-[#9a9a9a] my-[3px] flex items-center whitespace-nowrap`}>{t}</div>
      ))}
      <div className="w-[99px] shrink-0 -mt-px mb-0 bg-white border-x border-b border-black text-[#111] flex items-center justify-center">ASX200,H4</div>
      {TABS_AFTER.map(([t, w]) => (
        <div key={t} className={`${w} shrink-0 border-r border-[#9a9a9a] my-[3px] flex items-center whitespace-nowrap`}>{t}</div>
      ))}
      <div className="w-[67px] shrink-0 pl-[13px] my-[3px] flex items-center overflow-hidden whitespace-nowrap">GBPNZD,H4</div>
      <div className="flex items-center gap-[16px] ml-[7px]">
        <div className="border-y-[4px] border-r-[5px] border-y-transparent border-r-black" />
        <div className="border-y-[4px] border-l-[5px] border-y-transparent border-l-black" />
      </div>
    </div>
  );
}

function StatusBar() {
  const cells: [string, string][] = [
    ["Default", "w-[150px] pl-[6px]"],
    ["2017.03.07 08:10", "w-[131px] pl-[5px]"],
    ["O: 5762.90", "w-[88px] pl-[5px]"],
    ["H: 5763.90", "w-[89px] pl-[6px]"],
    ["L: 5753.96", "w-[85px] pl-[6px]"],
    ["C: 5757.00", "w-[88px] pl-[7px]"],
    ["V: 375", "w-[84px] pl-[6px]"],
  ];
  return (
    <div className="h-[29px] bg-[#f0f0f0] flex items-center shrink-0 text-[14.2px] text-[#222] mt-px">
      <span className="w-[1024px] pl-[2px] pt-[4px] shrink-0">For Help, press F1</span>
      {cells.map(([t, w]) => (
        <div key={t} className={`${w} h-full shrink-0 border-l border-[#c4c4c4] pt-[4px] flex items-center whitespace-nowrap`}>{t}</div>
      ))}
      <div className="h-full border-l border-[#c4c4c4] pl-[5px] pt-[4px] flex items-center whitespace-nowrap">
        <svg width="31" height="24" viewBox="0 0 31 24" className="mr-[4px] shrink-0">
          {[0, 3, 6, 9, 12, 15, 18, 21, 24, 27].map((x, i) => (
            <g key={x}>
              <rect x={x} y={0} width={2} height={24 - i * 1.5 - 9} fill="#8a9a2a" />
              <rect x={x} y={24 - i * 1.5 - 9} width={2} height={i * 1.5 + 9} fill="#1a5a8a" />
            </g>
          ))}
        </svg>
        49407/241 kb
      </div>
    </div>
  );
}

function TaskCell({ children, w = "w-[62px]", open = false, className = "" }: { children: ReactNode; w?: string; open?: boolean; className?: string }) {
  return (
    <div className={`${w} h-[50px] shrink-0 flex items-center justify-center relative ${className}`}>
      {children}
      {open && <div className="absolute left-1/2 -translate-x-1/2 w-[51px] bottom-0 h-[3px] bg-[#f7dcbc]" />}
    </div>
  );
}

function Taskbar() {
  return (
    <div className="h-[50px] bg-[#131313] flex items-stretch shrink-0 text-white">
      <TaskCell w="w-[58px]">
        <svg width="22" height="22" viewBox="0 0 22 22" fill="#fff"><path d="M0 3.5 9 2v8.5H0zM10 1.8 22 0v10.5H10zM0 11.5h9V20l-9-1.5zM10 11.5h12V22l-12-1.8z" /></svg>
      </TaskCell>
      <TaskCell w="w-[66px]">
        <svg width="26" height="24" viewBox="0 0 26 24" fill="none" stroke="#fff" strokeWidth="1.2"><path d="M6.5 2.5h13v19h-13zM3 5v14M23 5v14" /></svg>
      </TaskCell>
      <TaskCell w="w-[61px]"><FaEdgeLegacy size={28} color="#0a78d7" /></TaskCell>
      <TaskCell>
        <svg width="28" height="28" viewBox="0 0 28 28"><path d="M2 3h10l2 3h12v20H2z" fill="#f7d774" /><rect x="10" y="16" width="9" height="10" fill="#4a9ed8" /><rect x="2" y="6" width="24" height="3" fill="#e8b93f" /></svg>
      </TaskCell>
      <TaskCell>
        <svg width="24" height="30" viewBox="0 0 24 30"><path d="M8 8V4a4 4 0 0 1 8 0v4" fill="none" stroke="#fff" strokeWidth="1.5" /><rect x="1" y="8" width="22" height="21" fill="#fff" /><rect x="7" y="14" width="4.5" height="4.5" /><rect x="12.5" y="14" width="4.5" height="4.5" /><rect x="7" y="19.5" width="4.5" height="4.5" /><rect x="12.5" y="19.5" width="4.5" height="4.5" /></svg>
      </TaskCell>
      <TaskCell>
        <svg width="24" height="36" viewBox="0 0 24 36" fill="#fff"><rect width="24" height="36" /><rect x="3" y="3" width="18" height="6" fill="#222" />{[12, 18, 24, 30].map((y) => [4, 10, 16].map((x) => <rect key={`${x}${y}`} x={x} y={y} width="3.5" height="3" fill="#333" />))}</svg>
      </TaskCell>
      <TaskCell open>
        <svg width="30" height="32" viewBox="0 0 30 32"><ellipse cx="15" cy="16" rx="14" ry="16" fill="#c94040" /><ellipse cx="15" cy="16" rx="10" ry="12" fill="#f2f2f2" /><path d="m8 20 4-8 3 6 2-7 4 9" fill="none" stroke="#e02020" strokeWidth="2" /></svg>
      </TaskCell>
      <TaskCell>
        <div className="w-[30px] h-[36px] bg-[#ee0000] flex items-center justify-center text-[30px] leading-none font-bold text-white">K</div>
      </TaskCell>
      <TaskCell open w="w-[64px]">
        <svg width="30" height="36" viewBox="0 0 30 36"><rect width="30" height="36" fill="#0a78d0" /><path d="M15 5c3 2 6 3 9 3v10c0 6-4 10-9 13-5-3-9-7-9-13V8c3 0 6-1 9-3z" fill="#fff" /><path d="M14 5v26h2V5zM6 16h18v2H6z" fill="#0a78d0" /></svg>
      </TaskCell>
      <TaskCell w="w-[58px]">
        <svg width="28" height="36" viewBox="0 0 28 36"><circle cx="11" cy="11" r="10" fill="#d0c4c8" /><path d="m6 6 10 10" stroke="#c04040" strokeWidth="2" /><path d="m12 16 6 12M18 14l-3 14" stroke="#5a9ac8" strokeWidth="1.6" /><circle cx="12" cy="30" r="3.5" fill="none" stroke="#5a9ac8" strokeWidth="1.5" /><circle cx="20" cy="30" r="3.5" fill="none" stroke="#5a9ac8" strokeWidth="1.5" /></svg>
      </TaskCell>
      <TaskCell open w="w-[66px]">
        <svg width="30" height="30" viewBox="0 0 30 30"><circle cx="15" cy="15" r="14.5" fill="#e8b92e" /><path d="M15 .5A14.5 14.5 0 0 0 2.5 8l7 12L15 9h12.5A14.5 14.5 0 0 0 15 .5z" fill="#d9402f" /><path d="M2.5 8A14.5 14.5 0 0 0 13 29.4L20 18l-10 2z" fill="#3aa655" /><circle cx="15" cy="15" r="6.5" fill="#fff" /><circle cx="15" cy="15" r="5" fill="#3f83d8" /></svg>
      </TaskCell>
      <TaskCell w="w-[58px]">
        <svg width="30" height="36" viewBox="0 0 30 36" fill="none"><rect x="9" y="0" width="12" height="5" fill="#e9e26a" /><path d="M7 10h16l5 5v19H2V15z" stroke="#bbb" /><circle cx="15" cy="22" r="5" stroke="#bbb" /><rect x="13" y="20" width="4" height="4" fill="#bbb" /></svg>
      </TaskCell>
      <TaskCell open w="w-[65px]">
        <svg width="26" height="32" viewBox="0 0 26 32"><rect x="8" y="0" width="16" height="26" fill="#cfe0f4" stroke="#5a8fc8" /><rect x="4" y="3" width="14" height="10" fill="#4a86d0" /><circle cx="9" cy="18" r="5" fill="#e8b894" /><path d="M1 32c0-6 3-9 8-9s8 3 8 9z" fill="#5ab04a" /></svg>
      </TaskCell>
      <TaskCell open w="w-[60px]" className="bg-[#2d2d2d]">
        <span className="text-[19px] tracking-[-1px] text-[#6d756f]">G<span className="text-[#4a9a6a]">O</span></span>
      </TaskCell>
      <div className="ml-auto flex items-center h-full">
        <svg width="14" height="10" viewBox="0 0 14 10" fill="none" stroke="#ddd" strokeWidth="1.3" className="mr-[24px]"><path d="m1 9 6-7 6 7" /></svg>
        <svg width="16" height="18" viewBox="0 0 16 18" fill="none" stroke="#aaa" className="mr-[22px]"><path d="M1 17C2 9 7 3 15 1M5 17c1-5 3-8 8-10M9 17c0-2 1-4 4-5" /><circle cx="13" cy="15.5" r="2" fill="#ddd" /></svg>
        <svg width="18" height="18" viewBox="0 0 18 18" className="mr-[22px]"><rect x="0.5" y="0.5" width="17" height="17" fill="none" stroke="#fff" /><rect x="0" y="0" width="18" height="8" fill="#fff" /><rect x="2" y="11" width="6" height="5" fill="#fff" /><rect x="10" y="11" width="6" height="5" fill="#fff" /></svg>
        <svg width="20" height="20" viewBox="0 0 20 20" fill="none" stroke="#aaa" className="mr-[21px]"><path d="M1 7h3l5-5v16l-5-5H1z" /><path d="M12 6c2 2 2 6 0 8M15 4c3 3 3 9 0 12" stroke="#555" /></svg>
        <svg width="18" height="20" viewBox="0 0 18 20" className="mr-[26px]"><rect x="0.5" y="2" width="17" height="16" fill="none" stroke="#fff" /><rect x="3" y="5" width="11" height="10" fill="#fff" /></svg>
        <svg width="18" height="26" viewBox="0 0 18 26" fill="none" stroke="#ddd" strokeWidth="1.2" className="mr-[27px]"><path d="M2 24c-2-3 1-8 4-12s7-9 9-8 1 4-2 8-6 6-7 5 2-6 5-9" /></svg>
        <svg width="30" height="22" viewBox="0 0 30 22" fill="none" stroke="#ddd" className="mr-[12px]"><rect x="0.5" y="0.5" width="29" height="21" /><path d="M4 6h22M4 9h22M4 12h22" strokeDasharray="1 1" /><path d="M8 16h14" /></svg>
        <span className="text-[15px] mr-[14px] w-[29px]">ENG</span>
        <div className="flex flex-col items-center text-[14.5px] leading-[22px] w-[76px] mr-[26px]">
          <span>9:01 AM</span>
          <span>21/04/2017</span>
        </div>
        <div className="relative w-[20px] mr-[31px]">
          <svg width="20" height="26" viewBox="0 0 20 26" fill="#fff"><path d="M0 0h20v18h-8l-5 6v-6H0z" /><path d="M3 5h14M3 9h14M3 13h10" stroke="#222" /></svg>
          <div className="absolute left-[7px] top-[12px] w-[19px] h-[19px] rounded-full bg-[#555] border border-[#888] flex items-center justify-center text-[13px]">1</div>
        </div>
      </div>
    </div>
  );
}

export default function App() {
  return (
    <div className={`w-[1920px] h-[1080px] overflow-hidden flex flex-col bg-[#f0f0f0] ${FONT}`}>
      <TitleBar />
      <MenuBar />
      <Toolbar />
      <div className="h-[3px] bg-[#a8a8a8] shrink-0" />
      <MainChart />
      <AdxPanel />
      <TcPanel />
      <TimeAxis />
      <TabStrip />
      <StatusBar />
      <Taskbar />
    </div>
  );
}
